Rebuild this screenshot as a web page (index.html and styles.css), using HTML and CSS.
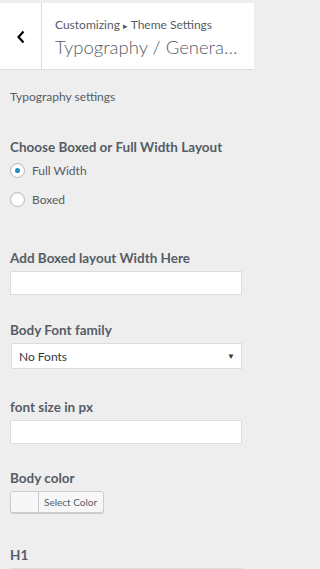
FILE: index.html
```html
<!DOCTYPE html>
<html>
<head>
<meta charset="utf-8">
<link rel="stylesheet" href="styles.css">
</head>
<body>
<div class="page">
<div class="header">
  <div class="back"><svg width="10" height="14" viewBox="0 0 10 14"><path d="M7.5 1.5 L2.5 7 L7.5 12.5" fill="none" stroke="#000" stroke-width="2.2"/></svg></div>
  <div class="titles">
    <div class="crumb">Customizing <span class="tri">▸</span> Theme Settings</div>
    <div class="title">Typography / General Settings</div>
  </div>
</div>
<div class="content">
  <div class="desc">Typography settings</div>

  <div class="control first">
    <div class="label">Choose Boxed or Full Width Layout</div>
    <div class="radio-row"><span class="radio checked"></span><span>Full Width</span></div>
    <div class="radio-row"><span class="radio"></span><span>Boxed</span></div>
  </div>

  <div class="control gap-lg">
    <div class="label">Add Boxed layout Width Here</div>
    <div class="input"></div>
  </div>

  <div class="control font">
    <div class="label">Body Font family</div>
    <div class="select"><span>No Fonts</span><span class="arrow">▼</span></div>
  </div>

  <div class="control size">
    <div class="label">font size in px</div>
    <div class="input"></div>
  </div>

  <div class="control">
    <div class="label">Body color</div>
    <div class="color-btn"><span class="swatch"></span><span class="color-text">Select Color</span></div>
  </div>

  <div class="control h1">
    <div class="label">H1</div>
    <div class="input"></div>
  </div>
</div>
</div>
</body>
</html>
```
FILE: styles.css
```css
html, body {
  margin: 0;
  padding: 0;
  background: #eeeeee;
  font-family: Lato, "Open Sans", sans-serif;
  color: #555d66;
  overflow: hidden;
}
.page {
  width: 254px;
}
.header {
  margin-top: 3px;
  height: 66px;
  background: #fff;
  display: flex;
  border-bottom: 1px solid #dddddd;
}
.back {
  width: 41px;
  border-right: 1px solid #dddddd;
  display: flex;
  align-items: center;
  justify-content: center;
  padding-top: 1px;
}
.titles {
  padding-left: 13px;
  padding-right: 14px;
  padding-top: 14px;
  min-width: 0;
  flex: 1;
}
.crumb {
  font-size: 12px;
  line-height: 16px;
  color: #555d66;
}
.tri { font-size: 9px; }
.title {
  font-size: 18.5px;
  font-weight: 300;
  line-height: 26px;
  color: #555d66;
  white-space: nowrap;
  overflow: hidden;
  text-overflow: ellipsis;
}
.content {
  padding: 0 12px 0 10px;
}
.desc {
  font-size: 12px;
  line-height: 14px;
  margin-top: 20px;
  color: #555d66;
}
.control {
  margin-top: 26px;
}
.control.first { margin-top: 35px; }
.control.gap-lg { margin-top: 43px; }
.control.font { margin-top: 27px; }
.control.size { margin-top: 30px; }
.control.h1 { margin-top: 32px; }
.label {
  font-size: 13.5px;
  font-weight: 700;
  line-height: 16px;
  color: #555d66;
  margin-bottom: 5px;
}
.control.first .label { margin-bottom: 7px; }
.radio-row {
  display: flex;
  align-items: center;
  gap: 7px;
  font-size: 12px;
  height: 16px;
  margin-bottom: 13px;
  color: #555d66;
}
.radio {
  width: 13px;
  height: 13px;
  border: 1px solid #b4b9be;
  border-radius: 50%;
  background: #fff;
  display: flex;
  align-items: center;
  justify-content: center;
  box-shadow: inset 0 1px 2px rgba(0,0,0,0.07);
}
.radio.checked::after {
  content: "";
  width: 5px;
  height: 5px;
  border-radius: 50%;
  background: #1e8cbe;
}
.input {
  height: 22px;
  background: #fff;
  border: 1px solid #dddddd;
}
.select {
  margin-left: 1px;
  margin-top: 1px;
  height: 24px;
  background: #fff;
  border: 1px solid #dddddd;
  display: flex;
  align-items: center;
  justify-content: space-between;
  padding: 0 6px 0 7px;
  font-size: 12px;
  color: #32373c;
}
.arrow { font-size: 8px; color: #32373c; }
.color-btn {
  display: inline-flex;
  height: 20px;
  border: 1px solid #cccccc;
  border-radius: 3px;
  background: #f7f7f7;
  box-shadow: 0 1px 0 #cccccc;
}
.swatch {
  width: 27px;
  border-right: 1px solid #cccccc;
  background: #f7f7f7;
  border-radius: 3px 0 0 3px;
}
.color-text {
  font-size: 10px;
  line-height: 20px;
  padding: 0 6px 0 5px;
  color: #555d66;
}
```
